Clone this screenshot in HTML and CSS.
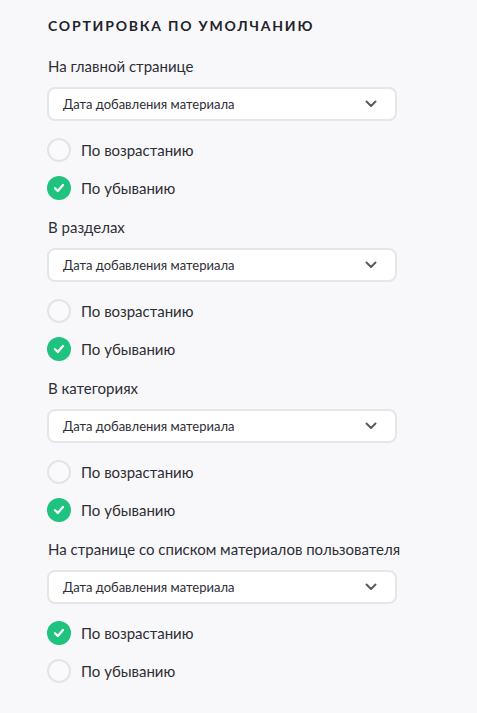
FILE: index.html
```html
<!DOCTYPE html>
<html lang="ru">
<head>
<meta charset="utf-8">
<link rel="stylesheet" href="styles.css">
</head>
<body>
<div class="panel">
  <h2 class="title">Сортировка по умолчанию</h2>

  <div class="group">
    <div class="label">На главной странице</div>
    <div class="select"><span>Дата добавления материала</span><svg class="chev" viewBox="0 0 12 8" width="12" height="8"><path d="M1.5 1.5 L6 6 L10.5 1.5" fill="none" stroke="#5a5a62" stroke-width="2" stroke-linecap="round" stroke-linejoin="round"/></svg></div>
    <div class="radio"><span class="dot"></span><span>По возрастанию</span></div>
    <div class="radio"><span class="dot on"><svg viewBox="0 0 12 10" width="12" height="10"><path d="M2 5.2 L4.8 8 L10 2" fill="none" stroke="#fff" stroke-width="2.2" stroke-linecap="round" stroke-linejoin="round"/></svg></span><span>По убыванию</span></div>
  </div>

  <div class="group">
    <div class="label">В разделах</div>
    <div class="select"><span>Дата добавления материала</span><svg class="chev" viewBox="0 0 12 8" width="12" height="8"><path d="M1.5 1.5 L6 6 L10.5 1.5" fill="none" stroke="#5a5a62" stroke-width="2" stroke-linecap="round" stroke-linejoin="round"/></svg></div>
    <div class="radio"><span class="dot"></span><span>По возрастанию</span></div>
    <div class="radio"><span class="dot on"><svg viewBox="0 0 12 10" width="12" height="10"><path d="M2 5.2 L4.8 8 L10 2" fill="none" stroke="#fff" stroke-width="2.2" stroke-linecap="round" stroke-linejoin="round"/></svg></span><span>По убыванию</span></div>
  </div>

  <div class="group">
    <div class="label">В категориях</div>
    <div class="select"><span>Дата добавления материала</span><svg class="chev" viewBox="0 0 12 8" width="12" height="8"><path d="M1.5 1.5 L6 6 L10.5 1.5" fill="none" stroke="#5a5a62" stroke-width="2" stroke-linecap="round" stroke-linejoin="round"/></svg></div>
    <div class="radio"><span class="dot"></span><span>По возрастанию</span></div>
    <div class="radio"><span class="dot on"><svg viewBox="0 0 12 10" width="12" height="10"><path d="M2 5.2 L4.8 8 L10 2" fill="none" stroke="#fff" stroke-width="2.2" stroke-linecap="round" stroke-linejoin="round"/></svg></span><span>По убыванию</span></div>
  </div>

  <div class="group">
    <div class="label">На странице со списком материалов пользователя</div>
    <div class="select"><span>Дата добавления материала</span><svg class="chev" viewBox="0 0 12 8" width="12" height="8"><path d="M1.5 1.5 L6 6 L10.5 1.5" fill="none" stroke="#5a5a62" stroke-width="2" stroke-linecap="round" stroke-linejoin="round"/></svg></div>
    <div class="radio"><span class="dot on"><svg viewBox="0 0 12 10" width="12" height="10"><path d="M2 5.2 L4.8 8 L10 2" fill="none" stroke="#fff" stroke-width="2.2" stroke-linecap="round" stroke-linejoin="round"/></svg></span><span>По возрастанию</span></div>
    <div class="radio"><span class="dot"></span><span>По убыванию</span></div>
  </div>
</div>
</body>
</html>
```

FILE: styles.css
```css
html, body {
  margin: 0;
  padding: 0;
  background: #f8f8fa;
}
body {
  font-family: Lato, "Noto Sans", sans-serif;
  color: #2b2b33;
}
.panel {
  padding: 16px 0 0 47px;
  width: 350px;
}
.title {
  margin: 0 0 20px 1px;
  font-size: 14px;
  font-weight: 700;
  letter-spacing: 1.8px;
  text-transform: uppercase;
  line-height: 20px;
  color: #22222a;
  white-space: nowrap;
}
.group {
  margin-bottom: 10px;
}
.label {
  font-size: 15px;
  line-height: 20px;
  margin: 0 0 11px 1px;
  color: #2e2e36;
  white-space: nowrap;
}
.select {
  box-sizing: border-box;
  height: 34px;
  border: 2px solid #e6e6ea;
  border-radius: 8px;
  background: #fff;
  display: flex;
  align-items: center;
  justify-content: space-between;
  padding: 0 18px 0 14px;
  font-size: 13px;
  color: #2e2e36;
  margin-bottom: 10px;
}
.chev {
  display: block;
}
.radio {
  display: flex;
  align-items: center;
  gap: 10px;
  height: 38px;
  font-size: 15px;
  color: #2e2e36;
}
.dot {
  box-sizing: border-box;
  width: 24px;
  height: 24px;
  border-radius: 50%;
  border: 2px solid #e4e4e8;
  background: #fafafc;
  display: flex;
  align-items: center;
  justify-content: center;
  flex: none;
}
.dot.on {
  border: none;
  background: #1fc27e;
}
.dot svg {
  display: block;
}
```
